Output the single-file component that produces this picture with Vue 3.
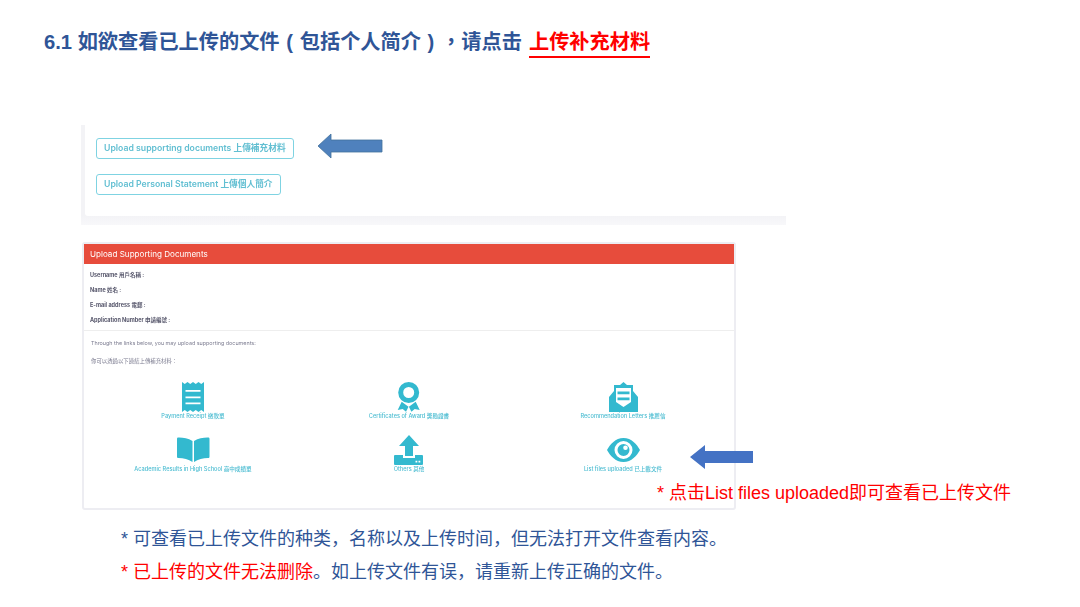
<script setup>
const rows = ['Username 用戶名稱 :', 'Name 姓名 :', 'E-mail address 電郵 :', 'Application Number 申請編號 :']
const items = [
  { id: 'receipt', label: 'Payment Receipt 繳款單' },
  { id: 'award', label: 'Certificates of Award 獎勵證書' },
  { id: 'letter', label: 'Recommendation Letters 推薦信' },
  { id: 'book', label: 'Academic Results in High School 高中成績單' },
  { id: 'upload', label: 'Others 其他' },
  { id: 'eye', label: 'List files uploaded 已上載文件' }
]
</script>

<template>
  <div class="slide">
    <h1 class="title">6.1 如欲查看已上传的文件<span class="punct">(</span>包括个人简介<span class="punct">)</span><span class="punct comma">，</span>请点击 <span class="title-red">上传补充材料</span></h1>

    <section class="top-panel">
      <div class="top-inner">
        <button class="btn">Upload supporting documents 上傳補充材料</button>
        <button class="btn">Upload Personal Statement 上傳個人簡介</button>
      </div>
    </section>

    <section class="card">
      <header class="card-head">Upload Supporting Documents</header>
      <div class="fields">
        <p v-for="r in rows" :key="r" class="field">{{ r }}</p>
      </div>
      <div class="intro">
        <p>Through the links below, you may upload supporting documents:</p>
        <p>你可以透過以下連結上傳補充材料：</p>
      </div>
      <div class="links">
        <div v-for="it in items" :key="it.id" class="link">
          <svg class="icon" viewBox="0 0 34 30" aria-hidden="true">
            <template v-if="it.id === 'receipt'">
              <path fill-rule="evenodd" d="M6 0l2.75 2 2.75-2 2.75 2L17 0l2.750 2 2.750-2 2.750 2L28 0v30l-2.750-2-2.750 2-2.750-2L17 30l-2.750-2-2.750 2-2.750-2L6 30zM9.500 8v1.800h15V8zM9.500 14.500v1.800h15v-1.800zM9.500 20.500v1.800h15v-1.800z" />
            </template>
            <template v-else-if="it.id === 'award'">
              <path fill-rule="evenodd" d="M16.700 0a10.500 10.500 0 1 1 0 21a10.500 10.500 0 1 1 0-21zM16.700 5a5.500 5.500 0 1 0 0 11a5.500 5.500 0 1 0 0-11z" />
              <path d="M9.700 19.700L16.500 24.700 14 29.700 10.700 27 5.700 28zM23.700 19.700L16.900 24.700 19.400 29.700 22.700 27 27.700 28z" />
            </template>
            <template v-else-if="it.id === 'letter'">
              <path fill-rule="evenodd" d="M17.500 0l3.500 3h6v6l5 6v15H3V15l5-6V3h6zM10 6v14l7.500 5 7.500-5V6zM11.500 9.500h12V12.300h-12zM11.500 15.500h12V18.300h-12z" />
            </template>
            <template v-else-if="it.id === 'book'">
              <path d="M16.500 6C12 3.500 7 2.500 2.500 2.600 1.500 2.600 1 3 1 4v17.500c0 1 .5 1.500 1.500 1.500 5 0 10 1.200 14 4zM18 6c4.500-2.500 9.500-3.500 14-3.400 1 0 1.500.4 1.500 1.400v17.500c0 1-.5 1.500-1.500 1.500-5 0-10 1.200-14 4z" />
            </template>
            <template v-else-if="it.id === 'upload'">
              <path fill-rule="evenodd" d="M17 0l10 11h-6v10h-8V11H7zM3 20h8v3h12v-3h7a1 1 0 0 1 1 1v8a1 1 0 0 1-1 1H3a1 1 0 0 1-1-1v-8a1 1 0 0 1 1-1zM23.500 25.800v1.800h1.800v-1.800zM26.500 25.800v1.800h1.800v-1.800z" />
            </template>
            <template v-else>
              <path fill-rule="evenodd" d="M17.500 3c8 0 13.500 6.500 16.500 12-3 5.500-8.500 12-16.500 12S4 20.500 1 15C4 9.500 9.500 3 17.500 3zM17.500 6a9 9 0 1 0 0 18a9 9 0 1 0 0-18zM17.500 9a6 6 0 1 1 0 12a6 6 0 1 1 0-12zM19.500 10.500a2.300 2.300 0 1 0 0 4.600a2.300 2.300 0 1 0 0-4.600z" />
            </template>
          </svg>
          <span class="link-label">{{ it.label }}</span>
        </div>
      </div>
    </section>

    <section class="notes">
      <p>* 可查看已上传文件的种类，名称以及上传时间，但无法打开文件查看内容。</p>
      <p><span class="red">* 已上传的文件无法删除</span>。如上传文件有误，请重新上传正确的文件。</p>
    </section>

    <svg class="arrow arrow-one" viewBox="0 0 66 26" aria-hidden="true">
      <path d="M1 13L14 1v6h51v12H14v6z" fill="#4f81bd" stroke="#41719c" stroke-width="0.8" />
    </svg>
    <svg class="arrow arrow-two" viewBox="0 0 63 24" aria-hidden="true">
      <path d="M0 12L15 0v6h48v12H15v6z" fill="#4472c4" />
    </svg>
    <p class="callout">* 点击List files uploaded即可查看已上传文件</p>
  </div>
</template>

<style scoped>
.slide {
  position: relative;
  width: 1080px;
  height: 607px;
  overflow: hidden;
  background: #fff;
  display: flex;
  flex-direction: column;
  align-items: flex-start;
  font-family: "Liberation Sans", "Noto Sans CJK SC", sans-serif;
  text-spacing-trim: space-all;
}
p { margin: 0; }
.title {
  margin: 26px 0 0 44px;
  height: 31px;
  font-size: 20.2px;
  line-height: 30px;
  font-weight: 700;
  color: #2f5597;
  white-space: nowrap;
}
.punct {
  display: inline-block;
  width: 1em;
  text-align: center;
}
.comma {
  font-family: "Noto Sans CJK TC", sans-serif;
}
.title-red {
  color: #ff0000;
  display: inline-block;
  height: 29px;
  margin-left: 1.5px;
  border-bottom: 2px solid #ff0000;
}
.top-panel {
  margin: 68px 0 0 81px;
  width: 705px;
  height: 100px;
  box-sizing: border-box;
  padding: 0 0 9px 4px;
  background: linear-gradient(to bottom, #f3f3f6, #f3f3f6 90%, #f8f8fa);
  filter: blur(0.6px);
}
.top-inner {
  height: 91px;
  background: #fff;
  border-bottom-left-radius: 3px;
  box-sizing: border-box;
  padding: 13px 0 0 11px;
  display: flex;
  flex-direction: column;
  align-items: flex-start;
  gap: 15px;
}
.btn {
  height: 21px;
  padding: 0 7px;
  background: #fff;
  border: 1.3px solid #7fd3e2;
  border-radius: 3px;
  color: #62bfd2;
  font: 600 8.7px/19px Inter, "Noto Sans CJK TC", sans-serif;
  white-space: nowrap;
}
.card {
  margin: 17px 0 0 82px;
  width: 654px;
  height: 268px;
  box-sizing: border-box;
  border: 2px solid #ededf2;
  border-radius: 3px;
  background: #fff;
  filter: blur(0.55px);
  font-family: Inter, "Noto Sans CJK TC", sans-serif;
}
.card-head {
  height: 20px;
  background: #e74c3c;
  color: #fff;
  font-size: 8.1px;
  line-height: 20px;
  padding-left: 6px;
}
.fields {
  padding: 4px 6px 4px;
  border-bottom: 1px solid #eeeeee;
  height: 67px;
  box-sizing: border-box;
  display: flex;
  flex-direction: column;
}
.field {
  font-size: 5.5px;
  line-height: 15px;
  font-weight: 700;
  color: #55556a;
  white-space: nowrap;
}
.intro {
  padding: 6px 7px 0;
  font-size: 5.4px;
  line-height: 12px;
  color: #7c7c90;
  display: flex;
  flex-direction: column;
  gap: 6px;
}
.links {
  margin-top: 15px;
  display: grid;
  grid-template-columns: 218px 214px 214px;
  grid-auto-rows: 53px;
}
.link {
  display: flex;
  flex-direction: column;
  align-items: center;
}
.icon {
  width: 34px;
  height: 30px;
  fill: #33b9cf;
  flex: none;
}
.link-label {
  font-size: 5.6px;
  line-height: 8px;
  font-weight: 500;
  color: #4dbdd2;
  white-space: nowrap;
}
.notes {
  margin: 13px 0 0 121px;
  font-size: 18px;
  line-height: 33px;
  color: #2f5597;
  white-space: nowrap;
}
.red { color: #ff0000; }
.arrow { position: absolute; }
.arrow-one { left: 317px; top: 133px; width: 66px; height: 26px; }
.arrow-two { left: 690px; top: 445px; width: 63px; height: 24px; }
.callout {
  position: absolute;
  left: 657px;
  top: 481px;
  font-size: 18px;
  line-height: 24px;
  color: #ff0000;
  white-space: nowrap;
}
</style>
